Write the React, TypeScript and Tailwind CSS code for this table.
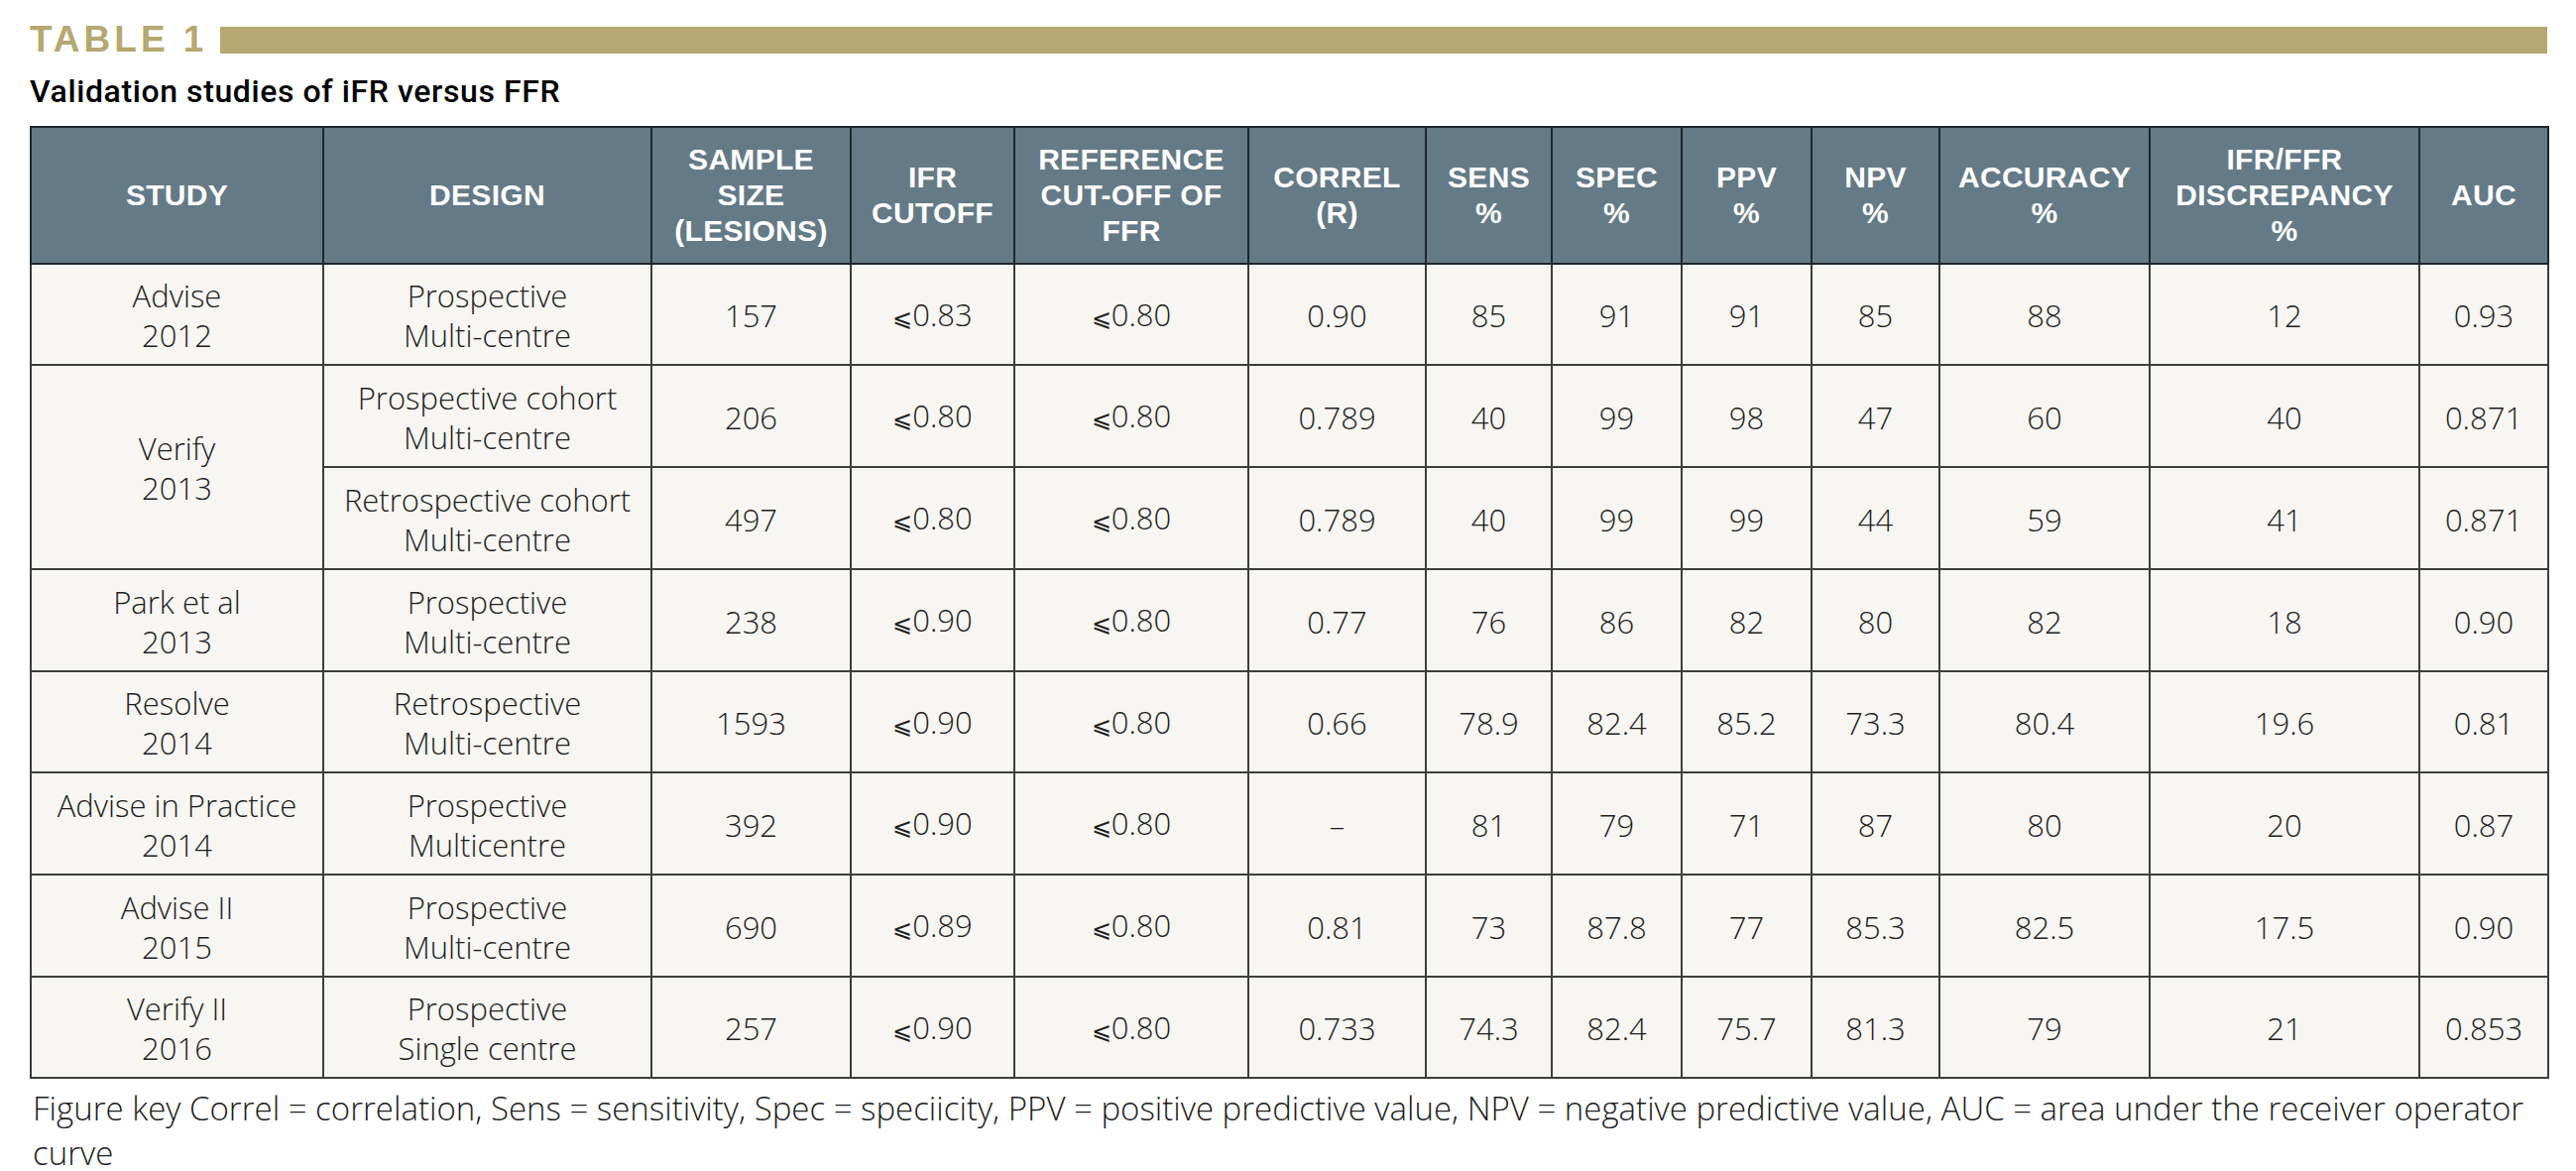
import React from 'react';

type Row = {
  study?: [string, string];
  span?: number;
  design: [string, string];
  values: string[];
  h: string;
};

const headers: string[][] = [
  ['STUDY'],
  ['DESIGN'],
  ['SAMPLE', 'SIZE', '(LESIONS)'],
  ['IFR', 'CUTOFF'],
  ['REFERENCE', 'CUT-OFF OF', 'FFR'],
  ['CORREL', '(R)'],
  ['SENS', '%'],
  ['SPEC', '%'],
  ['PPV', '%'],
  ['NPV', '%'],
  ['ACCURACY', '%'],
  ['IFR/FFR', 'DISCREPANCY', '%'],
  ['AUC'],
];

const rows: Row[] = [
  {
    study: ['Advise', '2012'],
    design: ['Prospective', 'Multi-centre'],
    values: ['157', '⩽0.83', '⩽0.80', '0.90', '85', '91', '91', '85', '88', '12', '0.93'],
    h: 'h-[102px]',
  },
  {
    study: ['Verify', '2013'],
    span: 2,
    design: ['Prospective cohort', 'Multi-centre'],
    values: ['206', '⩽0.80', '⩽0.80', '0.789', '40', '99', '98', '47', '60', '40', '0.871'],
    h: 'h-[103px]',
  },
  {
    design: ['Retrospective cohort', 'Multi-centre'],
    values: ['497', '⩽0.80', '⩽0.80', '0.789', '40', '99', '99', '44', '59', '41', '0.871'],
    h: 'h-[103px]',
  },
  {
    study: ['Park et al', '2013'],
    design: ['Prospective', 'Multi-centre'],
    values: ['238', '⩽0.90', '⩽0.80', '0.77', '76', '86', '82', '80', '82', '18', '0.90'],
    h: 'h-[103px]',
  },
  {
    study: ['Resolve', '2014'],
    design: ['Retrospective', 'Multi-centre'],
    values: ['1593', '⩽0.90', '⩽0.80', '0.66', '78.9', '82.4', '85.2', '73.3', '80.4', '19.6', '0.81'],
    h: 'h-[102px]',
  },
  {
    study: ['Advise in Practice', '2014'],
    design: ['Prospective', 'Multicentre'],
    values: ['392', '⩽0.90', '⩽0.80', '–', '81', '79', '71', '87', '80', '20', '0.87'],
    h: 'h-[103px]',
  },
  {
    study: ['Advise II', '2015'],
    design: ['Prospective', 'Multi-centre'],
    values: ['690', '⩽0.89', '⩽0.80', '0.81', '73', '87.8', '77', '85.3', '82.5', '17.5', '0.90'],
    h: 'h-[103px]',
  },
  {
    study: ['Verify II', '2016'],
    design: ['Prospective', 'Single centre'],
    values: ['257', '⩽0.90', '⩽0.80', '0.733', '74.3', '82.4', '75.7', '81.3', '79', '21', '0.853'],
    h: 'h-[102px]',
  },
];

const bodyFont = { fontFamily: '"Open Sans", Roboto, "Liberation Sans", sans-serif' };
const td =
  'border-2 border-[#3d3d3d] bg-[#f7f6f2] p-0 pt-[2px] text-center align-middle text-[31px] font-light leading-[40px] text-[#1e1e1e]';

// the ⩽ sign is drawn smaller than the digits in the print
function Cell({ v }: { v: string }) {
  if (v.startsWith('⩽')) {
    return (
      <>
        <span className="text-[24px]">⩽</span>
        {v.slice(1)}
      </>
    );
  }
  return <>{v}</>;
}

export default function App() {
  return (
    <div className="min-h-[1181px] w-[2598px] bg-white pl-[30px] pt-[22px]" style={bodyFont}>
      {/* Title */}
      <div className="flex w-[2539px] items-center gap-[13px]">
        <span
          className="text-[37px] font-bold leading-[36px] tracking-[4px] text-[#b5a870]"
          style={{ fontFamily: '"Liberation Sans", sans-serif' }}
        >
          TABLE 1
        </span>
        <div className="h-[27px] flex-1 bg-[#b5a870]" />
      </div>
      <h2
        className="mt-[14px] text-[32px] font-medium leading-[40px] tracking-[0.6px] text-black"
        style={{ fontFamily: 'Roboto, "Liberation Sans", sans-serif' }}
      >
        Validation studies of iFR versus FFR
      </h2>

      {/* Table */}
      <table className="mt-[15px] w-[2539px] table-fixed border-collapse">
        <colgroup>
          <col className="w-[295px]" />
          <col className="w-[331px]" />
          <col className="w-[201px]" />
          <col className="w-[165px]" />
          <col className="w-[236px]" />
          <col className="w-[179px]" />
          <col className="w-[127px]" />
          <col className="w-[131px]" />
          <col className="w-[131px]" />
          <col className="w-[129px]" />
          <col className="w-[212px]" />
          <col className="w-[272px]" />
          <col className="w-[130px]" />
        </colgroup>
        <thead>
          <tr className="h-[138px]">
            {headers.map((lines, i) => (
              <th
                key={i}
                className="border-2 border-[#1d272d] bg-[#647a87] p-0 text-center align-middle text-[30px] font-bold leading-[36px] tracking-[0.3px] text-white"
                style={{ fontFamily: '"Liberation Sans", sans-serif' }}
              >
                {lines.map((l, j) => (
                  <div key={j}>{l}</div>
                ))}
              </th>
            ))}
          </tr>
        </thead>
        <tbody>
          {rows.map((r, i) => (
            <tr key={i} className={r.h}>
              {r.study && (
                <td className={td} rowSpan={r.span ?? 1}>
                  <div>{r.study[0]}</div>
                  <div>{r.study[1]}</div>
                </td>
              )}
              <td className={td}>
                <div>{r.design[0]}</div>
                <div>{r.design[1]}</div>
              </td>
              {r.values.map((v, j) => (
                <td key={j} className={td}>
                  <Cell v={v} />
                </td>
              ))}
            </tr>
          ))}
        </tbody>
      </table>

      {/* Key */}
      <div className="mt-[7px] pl-[3px] text-[33px] font-light leading-[45px] text-[#1e1e1e]">
        <p>
          Figure key Correl = correlation, Sens = sensitivity, Spec = speciicity, PPV = positive predictive value, NPV =
          negative predictive value, AUC = area under the receiver operator
        </p>
        <p>curve</p>
      </div>
    </div>
  );
}
